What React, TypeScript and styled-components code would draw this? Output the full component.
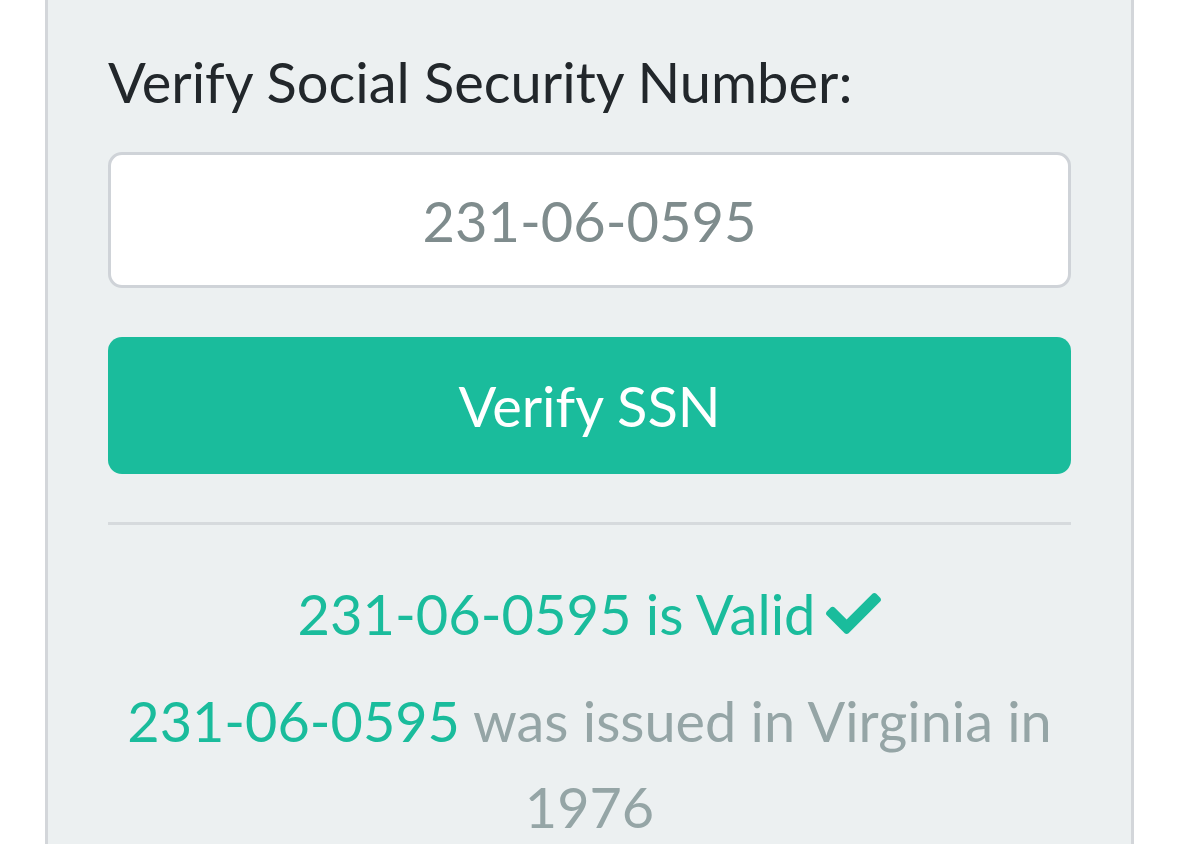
import React from "react";
import styled, { createGlobalStyle } from "styled-components";
import { FaCheck } from "react-icons/fa";

const GlobalStyle = createGlobalStyle`
    html, body {
        margin: 0;
        padding: 0;
        background: #ffffff;
        font-family: Lato, "Open Sans", sans-serif;
    }
`;

const content = function App ()
{
    const ssn = "231-06-0595";

    return (
        <>
            <GlobalStyle/>
            <Page>
                <Panel>
                    <Heading>Verify Social Security Number:</Heading>
                    <Field defaultValue={ssn} aria-label="Social Security Number"/>
                    <Button type="button">Verify SSN</Button>
                    <Divider/>
                    <Status>
                        {ssn} is Valid
                        <Check><FaCheck/></Check>
                    </Status>
                    <Detail>
                        <Accent>{ssn}</Accent> was issued in Virginia in 1976
                    </Detail>
                </Panel>
            </Page>
        </>
    );
};

/*
|--------------------------------------------------------------------------
| Styled
|--------------------------------------------------------------------------
*/

const Page = styled.div`
    padding: 0 45px 0 45px;
    height: 844px;
    overflow: hidden;
`;

const Panel = styled.section`
    box-sizing: border-box;
    width: 1089px;
    min-height: 900px;
    background: #ecf0f1;
    border-left: 3px solid #d3d6da;
    border-right: 3px solid #d3d6da;
    padding: 48px 60px 40px 60px;
    display: flex;
    flex-direction: column;
`;

const Heading = styled.label`
    font-size: 56px;
    line-height: 1.2;
    color: #22272b;
    font-weight: 400;
    margin: 0 0 37px 0;
`;

const Field = styled.input`
    box-sizing: border-box;
    width: 100%;
    height: 136px;
    border: 3px solid #cfd3d8;
    border-radius: 14px;
    background: #ffffff;
    text-align: center;
    font-family: Lato, "Open Sans", sans-serif;
    font-size: 56px;
    color: #7f8c8d;
    outline: none;
    padding: 0 20px;
`;

const Button = styled.button`
    all: unset;
    box-sizing: border-box;
    margin-top: 49px;
    width: 100%;
    height: 137px;
    border-radius: 14px;
    background: #1abc9c;
    color: #ffffff;
    font-family: Lato, "Open Sans", sans-serif;
    font-size: 56px;
    text-align: center;
    cursor: pointer;
`;

const Divider = styled.hr`
    margin: 48px 0 0 0;
    border: none;
    height: 3px;
    background: #d6dadd;
`;

const Status = styled.p`
    margin: 55px 0 0 0;
    font-size: 56px;
    line-height: 1.2;
    color: #1abc9c;
    text-align: center;
`;

const Check = styled.span`
    display: inline-block;
    margin-left: 11px;
    font-size: 55px;
    vertical-align: -6px;

    svg { display: block; }
`;

const Detail = styled.p`
    margin: 31px 0 0 0;
    font-size: 55.8px;
    line-height: 86px;
    color: #95a5a6;
    text-align: center;
`;

const Accent = styled.span`
    color: #1abc9c;
`;

Object.freeze(content);
export default content;
